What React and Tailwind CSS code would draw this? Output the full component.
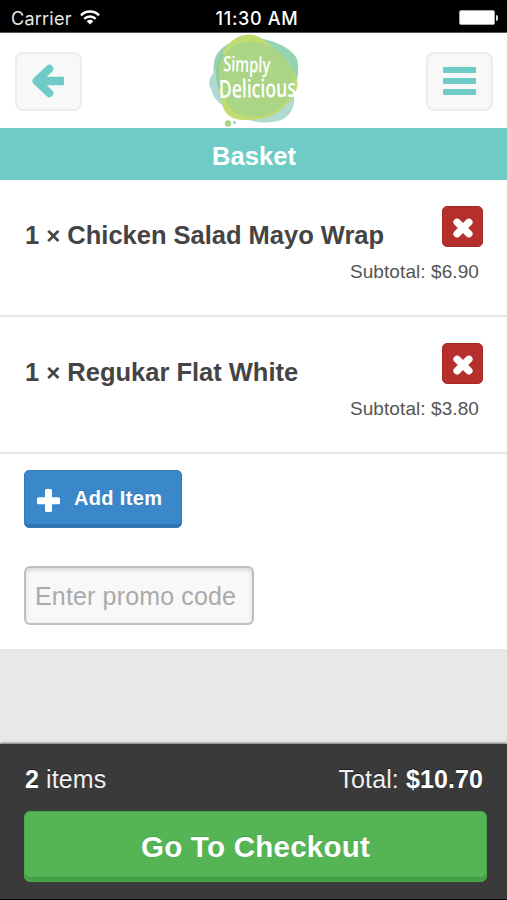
import React from 'react';

const items = [
  { id: 1, qty: 1, name: 'Chicken Salad Mayo Wrap', subtotal: '$6.90' },
  { id: 2, qty: 1, name: 'Regukar Flat White', subtotal: '$3.80' },
];

function StatusBar() {
  return (
    <div className="grid h-[33px] shrink-0 grid-cols-3 items-center border-b border-[#555] bg-black pt-[5px] font-[Inter,sans-serif] text-[#e8e8e8]">
      <div className="flex items-center gap-2 pl-[11px]">
        <span className="text-[18px] leading-6 tracking-[0.250px]">Carrier</span>
        <svg className="mb-[3px] h-[15px] w-[20px]" viewBox="0 0 20 15" fill="none" stroke="#fff" strokeWidth="2.5">
          <path d="M1 5.3a12.8 12.8 0 0 1 18 0" />
          <path d="M4.3 8.9a8.1 8.1 0 0 1 11.4 0" />
          <path d="M6.7 11.2a4.7 4.7 0 0 1 6.6 0L10 14.5z" fill="#fff" stroke="none" />
        </svg>
      </div>
      <div className="pl-[7px] text-center text-[18px] font-medium leading-6 tracking-[0.700px] text-white whitespace-nowrap">11:30 AM</div>
      <div className="flex items-center justify-end pb-[2px] pr-[9px]">
        <div className="h-[15px] w-[36px] rounded-[2px] border border-[#aaa] bg-white" />
        <div className="ml-px h-[6px] w-[2px] rounded-r-full bg-[#ddd]" />
      </div>
    </div>
  );
}

function Logo() {
  return (
    <svg className="h-[95px] w-[92px] overflow-visible" viewBox="0 0 92 95">
      <path d="M6 30C7 19 16 12 28 7C39 1 53 5 63 8C76 12 89 20 90 30C91 43 88 58 80 68C67 81 37 84 22 76C8 66 4 47 6 30z" fill="#96d3b3" />
      <path d="M7 38C16 24 38 20 56 29C73 36 88 53 86 69C85 80 77 88 64 89C48 91 32 86 22 77C12 71 6 67 4 58C0 51 0 45 7 38z" fill="#b0d9d2" />
      <path d="M17 16C23 6 33 1 42 1.500C52 2 57 8 65 15C77 24 87 36 89.500 49C90 60 82 68 74 76C62 86 50 87 36 87C24 87 16 82 14 70C12 61 7 52 9 39C11 27 12 23 17 16z" fill="#c0db70" />
      <path d="M17 21C26 8 43 6 58 12C74 19 86 34 86.500 48C88 61 79 68 71 76C59 85 44 85 33 82C21 78 17 68 14 55C9 42 9 31 17 21z" fill="#a9d585" />
      <path d="M15 21C8 31 8 42 12 55" fill="none" stroke="#93cba0" strokeWidth="3" />
      <circle cx="20" cy="90.500" r="3.200" fill="#a9d582" />
      <circle cx="26.500" cy="89.500" r="1.300" fill="#6ecbc5" />
      <g fill="#fff" fontFamily="'Open Sans', sans-serif" fontWeight="600">
        <text transform="translate(15 38) rotate(2)" fontSize="21" textLength="47" lengthAdjust="spacingAndGlyphs">Simply</text>
        <text transform="translate(11 65) rotate(-1)" fontSize="25" textLength="77" lengthAdjust="spacingAndGlyphs">Delicious</text>
      </g>
    </svg>
  );
}

function HeaderButton({ label, children }) {
  return (
    <button aria-label={label} className="mt-px flex h-[59px] w-[67px] items-center justify-center rounded-lg border-2 border-[#ececec] bg-[#f8f8f8]">
      {children}
    </button>
  );
}

function Header() {
  return (
    <div className="flex h-[95px] shrink-0 items-center justify-between bg-white pl-[15px] pr-[14px]">
      <HeaderButton label="Back">
        <svg className="-ml-px h-[34px] w-[34px]" viewBox="0 0 34 34" fill="none" stroke="#6ecbc5" strokeWidth="8.500" strokeLinejoin="round">
          <path d="M18.300 4.800L5.500 17l12.800 12.200" strokeLinecap="round" strokeWidth="8" />
          <path d="M7 17h23" />
          <rect x="28" y="12.750" width="5" height="8.500" rx="1.200" fill="#6ecbc5" stroke="none" />
        </svg>
      </HeaderButton>
      <Logo />
      <HeaderButton label="Menu">
        <div className="flex flex-col gap-[5px]">
          <span className="h-[6px] w-[33px] rounded-[1px] bg-[#6ecbc5]" />
          <span className="h-[6px] w-[33px] rounded-[1px] bg-[#6ecbc5]" />
          <span className="h-[6px] w-[33px] rounded-[1px] bg-[#6ecbc5]" />
        </div>
      </HeaderButton>
    </div>
  );
}

function BasketItem({ item }) {
  return (
    <div className="flex h-[137px] justify-between border-b-2 border-[#e6e6e6] pl-[25px] pr-6 pt-[26px]">
      <h3 className="mt-[13px] text-[25.500px] font-bold leading-[32px] tracking-[-0.010px] text-[#444] whitespace-nowrap">
        {item.qty} <span className="text-[24px]">×</span> {item.name}
      </h3>
      <div className="flex w-[41px] flex-col items-end">
        <button aria-label="Remove" className="flex h-[41px] w-[41px] shrink-0 items-center justify-center rounded-[5px] border border-[#a52a26] bg-[#b5302c]">
          <svg className="mt-[3px] h-[22px] w-[22px] shrink-0" viewBox="0 0 22 22" stroke="#fff" strokeWidth="7.200" strokeLinecap="round">
            <path d="M5 5.200l12 11.600M17 5.200L5 16.800" />
          </svg>
        </button>
        <p className="mr-1 mt-[13px] text-[19px] leading-[24px] tracking-[0.080px] text-[#555] whitespace-nowrap">Subtotal: {item.subtotal}</p>
      </div>
    </div>
  );
}

export default function App() {
  return (
    <div className="flex h-[900px] w-[507px] flex-col overflow-hidden bg-[#e8e8e8] font-['Liberation_Sans',sans-serif]">
      <StatusBar />
      <Header />

      <div className="flex h-[52px] shrink-0 items-center justify-center bg-[#6ecbc5] pl-px pt-[4px] text-[25.500px] font-bold tracking-[0.100px] text-white">
        Basket
      </div>

      {/* Basket contents */}
      <div className="h-[469px] shrink-0 bg-white">
        {items.map(item => (
          <BasketItem key={item.id} item={item} />
        ))}

        <div className="flex flex-col items-start gap-[38px] pl-6 pt-4">
          <button className="flex h-[58px] w-[158px] items-center rounded-[5px] border border-[#3579b5] bg-[#3a87c9] pl-3 text-white shadow-[inset_0_-3px_0_#2f74b0]">
            <svg className="mt-[2px] h-[23px] w-[23px]" viewBox="0 0 23 23" fill="#fff">
              <rect x="0" y="8.200" width="23" height="7" rx="1.500" />
              <rect x="8" y="0" width="7" height="23" rx="1.500" />
            </svg>
            <span className="-mt-[3px] ml-[14px] text-[20px] font-bold tracking-[0.350px] [text-shadow:0_-1px_0_rgba(0,0,0,0.15)]">Add Item</span>
          </button>
          <input
            placeholder="Enter promo code"
            className="h-[59px] w-[230px] rounded-md border-2 border-[#bfbfbf] bg-[#f8f8f8] px-[9px] pt-[2px] text-[25px] tracking-[0.150px] shadow-[inset_0_2px_4px_rgba(0,0,0,0.14)] placeholder:text-[#aaa]"
          />
        </div>
      </div>

      {/* Checkout footer */}
      <div className="mt-auto h-[156px] shrink-0 border-b border-black bg-[#3a3a3a] px-6 pt-[19px] text-white shadow-[0_-1px_2px_rgba(0,0,0,0.5)]">
        <div className="flex justify-between pl-px text-[25px] leading-[32px] tracking-[0.100px] text-[#f0f0f0] [text-shadow:0_-1px_0_#222]">
          <span><b className="text-white">2</b> items</span>
          <span>Total: <b className="text-white">$10.70</b></span>
        </div>
        <button className="mt-[16px] flex h-[71px] w-[463px] items-center justify-center rounded-[6px] border border-[#4ca64c] bg-[#55b555] pt-px text-[29.500px] font-bold tracking-[0.250px] shadow-[inset_0_-4px_0_#43a047] [text-shadow:0_-1px_0_rgba(0,0,0,0.12)]">
          Go To Checkout
        </button>
      </div>
    </div>
  );
}
